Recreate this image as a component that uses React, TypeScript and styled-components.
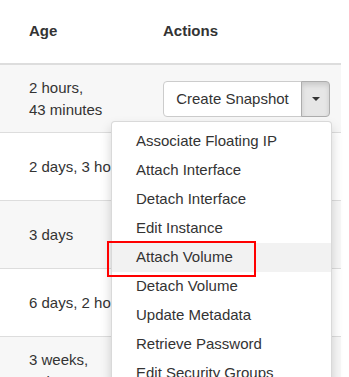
import React from "react";
import styled, { createGlobalStyle } from "styled-components";

const Global = createGlobalStyle`
  html, body { margin: 0; padding: 0; background: #fff; overflow: hidden; }
  body {
    font-family: "Liberation Sans", Arial, sans-serif;
    font-size: 15px;
    line-height: 1.42857;
    color: #333;
  }
`;

const Table = styled.div`
  width: 341px;
  display: flex;
  flex-direction: column;
`;

const HeaderRow = styled.div`
  display: grid;
  grid-template-columns: 155px 1fr;
  height: 63px;
  border-bottom: 2px solid #ddd;
  align-items: center;
`;

const HeadCell = styled.div<{ $first?: boolean }>`
  font-weight: bold;
  padding-left: ${(p) => (p.$first ? "29px" : "8px")};
  padding-bottom: 1px;
`;

const Row = styled.div<{ $striped: boolean }>`
  display: grid;
  grid-template-columns: 155px 1fr;
  height: 67px;
  border-bottom: 1px solid #ddd;
  align-items: center;
  background: ${(p) => (p.$striped ? "#f7f7f7" : "#fff")};
`;

const AgeCell = styled.div`
  padding: 0 21px 0 29px;
`;

const ActionCell = styled.div`
  padding-left: 8px;
`;

const BtnGroup = styled.div`
  position: relative;
  display: inline-flex;
  height: 36px;
`;

const MainButton = styled.button`
  font: inherit;
  color: #333;
  background: #fff;
  border: 1px solid #ccc;
  border-radius: 4px 0 0 4px;
  padding: 0 12px;
  height: 36px;
  width: 139px;
  cursor: pointer;
`;

const ToggleButton = styled.button<{ $open: boolean }>`
  width: 29px;
  height: 36px;
  margin-left: -1px;
  border: 1px solid ${(p) => (p.$open ? "#adadad" : "#ccc")};
  border-radius: 0 4px 4px 0;
  background: ${(p) => (p.$open ? "#e6e6e6" : "#fff")};
  box-shadow: ${(p) => (p.$open ? "inset 0 3px 5px rgba(0,0,0,.125)" : "none")};
  display: flex;
  align-items: center;
  justify-content: center;
  padding: 0;
  cursor: pointer;
`;

const Caret = styled.span`
  display: block;
  width: 0;
  height: 0;
  border-left: 4px solid transparent;
  border-right: 4px solid transparent;
  border-top: 4px solid #333;
  margin-top: 1px;
`;

const Menu = styled.ul`
  position: absolute;
  left: -52px;
  top: 40px;
  width: 219px;
  margin: 0;
  padding: 5px 0;
  list-style: none;
  background: #fff;
  border: 1px solid rgba(0, 0, 0, 0.15);
  border-radius: 4px;
  box-shadow: 0 6px 12px rgba(0, 0, 0, 0.175);
  z-index: 10;
`;

const MenuItem = styled.li<{ $hover?: boolean }>`
  height: 29px;
  display: flex;
  align-items: center;
  padding-left: 24px;
  white-space: nowrap;
  color: #333;
  background: ${(p) => (p.$hover ? "#f2f2f2" : "transparent")};
  position: relative;
`;

const Highlight = styled.span`
  position: absolute;
  left: -5px;
  top: -2px;
  width: 149px;
  height: 36px;
  box-sizing: border-box;
  border: 2px solid #f00;
  pointer-events: none;
`;

const rows = [
  "2\u00a0hours, 43\u00a0minutes",
  "2\u00a0days, 3\u00a0hours",
  "3\u00a0days",
  "6\u00a0days, 2\u00a0hours",
  "3\u00a0weeks, 6\u00a0days",
];

const menuItems = [
  "Associate Floating IP",
  "Attach Interface",
  "Detach Interface",
  "Edit Instance",
  "Attach Volume",
  "Detach Volume",
  "Update Metadata",
  "Retrieve Password",
  "Edit Security Groups",
  "Console",
];

export default function App() {
  return (
    <>
      <Global />
      <Table>
        <HeaderRow>
          <HeadCell $first>Age</HeadCell>
          <HeadCell>Actions</HeadCell>
        </HeaderRow>
        {rows.map((age, i) => (
          <Row key={i} $striped={i % 2 === 0}>
            <AgeCell>{age}</AgeCell>
            <ActionCell>
              <BtnGroup>
                <MainButton>Create Snapshot</MainButton>
                <ToggleButton $open={i === 0}>
                  <Caret />
                </ToggleButton>
                {i === 0 && (
                  <Menu>
                    {menuItems.map((m) => (
                      <MenuItem key={m} $hover={m === "Attach Volume"}>
                        {m === "Attach Volume" && <Highlight />}
                        {m}
                      </MenuItem>
                    ))}
                  </Menu>
                )}
              </BtnGroup>
            </ActionCell>
          </Row>
        ))}
      </Table>
    </>
  );
}
